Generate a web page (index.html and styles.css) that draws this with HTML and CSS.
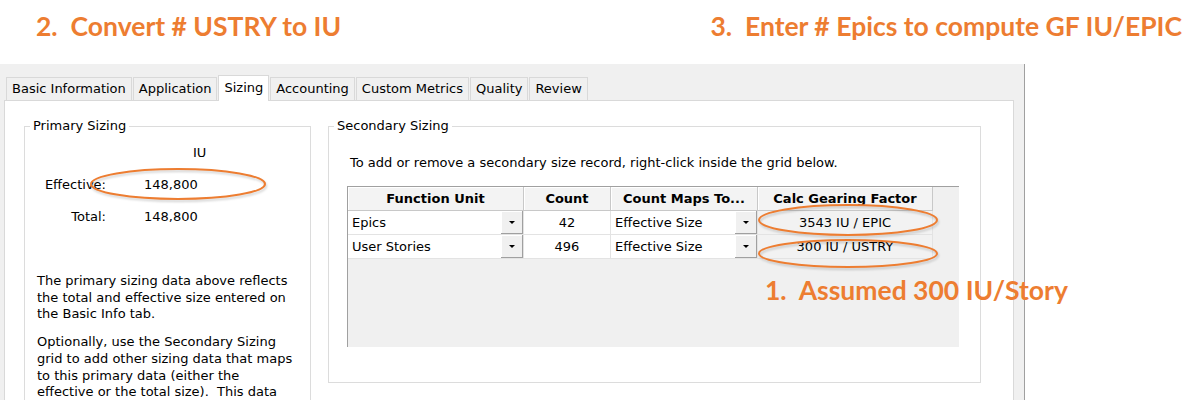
FILE: index.html
```html
<!DOCTYPE html>
<html lang="en">
<head>
<meta charset="utf-8">
<title>Sizing</title>
<link rel="stylesheet" href="styles.css">
</head>
<body>
<div class="page">
  <header class="titles">
    <h1 class="note">2.&nbsp; Convert # USTRY to IU</h1>
    <h1 class="note">3.&nbsp; Enter # Epics to compute GF IU/EPIC</h1>
  </header>

  <div class="window">
    <nav class="tabs">
      <div class="tab">Basic Information</div>
      <div class="tab">Application</div>
      <div class="tab active">Sizing</div>
      <div class="tab">Accounting</div>
      <div class="tab">Custom Metrics</div>
      <div class="tab">Quality</div>
      <div class="tab">Review</div>
    </nav>

    <div class="panel">
      <fieldset class="group primary">
        <legend>Primary Sizing</legend>
        <div class="metrics">
          <span></span><span class="unit">IU</span>
          <span class="lbl">Effective:</span><span class="val">148,800</span>
          <span class="lbl">Total:</span><span class="val">148,800</span>
        </div>
        <p class="help">The primary sizing data above reflects<br>the total and effective size entered on<br>the Basic Info tab.</p>
        <p class="help">Optionally, use the Secondary Sizing<br>grid to add other sizing data that maps<br>to this primary data (either the<br>effective or the total size).&nbsp; This data</p>
      </fieldset>

      <fieldset class="group secondary">
        <legend>Secondary Sizing</legend>
        <p class="intro">To add or remove a secondary size record, right-click inside the grid below.</p>
        <div class="grid">
          <div class="hd">Function Unit</div>
          <div class="hd">Count</div>
          <div class="hd">Count Maps To...</div>
          <div class="hd">Calc Gearing Factor</div>

          <div class="cell combo"><span>Epics</span><span class="drop"><i></i></span></div>
          <div class="cell num">42</div>
          <div class="cell combo"><span>Effective Size</span><span class="drop"><i></i></span></div>
          <div class="cell calc">3543 IU / EPIC</div>

          <div class="cell combo"><span>User Stories</span><span class="drop"><i></i></span></div>
          <div class="cell num">496</div>
          <div class="cell combo"><span>Effective Size</span><span class="drop"><i></i></span></div>
          <div class="cell calc">300 IU / USTRY</div>
        </div>
      </fieldset>
    </div>
  </div>

  <div class="note callout">1.&nbsp; Assumed 300 IU/Story</div>

  <svg class="marks" width="1200" height="400" viewBox="0 0 1200 400" aria-hidden="true">
    <g fill="none" stroke="#ed7d31" stroke-width="2">
      <ellipse cx="178" cy="184" rx="87" ry="15"/>
      <ellipse cx="848" cy="220" rx="89" ry="15"/>
      <ellipse cx="848" cy="253.5" rx="89" ry="13.5"/>
    </g>
  </svg>
</div>
</body>
</html>
```

FILE: styles.css
```css
* { box-sizing: border-box; }

html, body {
  margin: 0;
  padding: 0;
  background: #ffffff;
}

.page {
  position: relative;
  width: 1200px;
  height: 400px;
  overflow: hidden;
  background: #ffffff;
  font-family: "DejaVu Sans", "Liberation Sans", sans-serif;
  font-size: 13px;
  color: #000000;
}

/* orange annotations */
.titles {
  height: 64px;
  display: flex;
  justify-content: space-between;
  padding: 12px 18px 0 36px;
}

.note {
  margin: 0;
  font-family: Lato, "Open Sans", sans-serif;
  font-weight: 700;
  font-size: 26.5px;
  line-height: 28px;
  color: #ed7d31;
  white-space: nowrap;
}

.callout {
  position: absolute;
  left: 765px;
  top: 276px;
}

.marks {
  position: absolute;
  left: 0;
  top: 0;
  pointer-events: none;
  filter: drop-shadow(1px 2px 1px rgba(0, 0, 0, 0.18));
}

/* dialog window */
.window {
  width: 1025px;
  height: 336px;
  background: #f0f0f0;
  border-right: 1px solid #a0a0a0;
  padding: 13px 10px 0 4px;
}

.tabs {
  display: flex;
  align-items: flex-end;
  height: 23px;
  padding-left: 2px;
}

.tab {
  height: 23px;
  padding: 0 5px;
  line-height: 22px;
  background: #f0f0f0;
  border: 1px solid #d9d9d9;
  border-bottom: none;
  margin-right: 1px;
  white-space: nowrap;
}

.tab.active {
  position: relative;
  z-index: 1;
  height: 26px;
  margin-bottom: -1px;
  line-height: 23px;
  background: #ffffff;
}

.panel {
  height: 313px;
  background: #ffffff;
  border: 1px solid #d9d9d9;
  display: flex;
  align-items: flex-start;
  gap: 17px;
  padding: 17px 0 0 19px;
}

.group {
  margin: 0;
  padding: 0;
  border: 1px solid #dcdcdc;
  min-width: 0;
}

.group legend {
  margin-left: 5px;
  padding: 0 3px;
  line-height: 16px;
}

/* primary sizing */
.primary {
  width: 287px;
  height: 320px;
}

.metrics {
  display: grid;
  grid-template-columns: 81px 1fr;
  grid-auto-rows: 16px;
  column-gap: 38px;
  row-gap: 16px;
  margin-top: 11px;
  line-height: 16px;
}

.lbl { text-align: right; }

.unit { padding-left: 49px; }

.help {
  margin: 0 0 11px 0;
  padding-left: 12px;
  line-height: 16.7px;
  white-space: nowrap;
}

.metrics + .help { margin-top: 48px; }

/* secondary sizing */
.secondary {
  width: 653px;
  padding: 0 0 35px 0;
}

.intro {
  margin: 21px 0 15px 21px;
  line-height: 16px;
  white-space: nowrap;
}

.grid {
  width: 612px;
  height: 161px;
  margin-left: 18px;
  background: #f0f0f0;
  border-left: 1px solid #a0a0a0;
  border-top: 1px solid #a0a0a0;
  display: grid;
  grid-template-columns: 176px 87px 147px 175px;
  grid-template-rows: 24px 24px 24px;
  align-content: start;
}

.hd {
  background: #f3f3f3;
  border-right: 1px solid #c8c8c8;
  border-bottom: 1px solid #c8c8c8;
  box-shadow: inset 1px 1px 0 #ffffff;
  font-weight: 700;
  text-align: center;
  line-height: 23px;
  white-space: nowrap;
}

.cell {
  background: #ffffff;
  border-right: 1px solid #e3e3e3;
  border-bottom: 1px solid #e3e3e3;
  line-height: 23px;
  white-space: nowrap;
}

.combo {
  display: flex;
  justify-content: space-between;
  padding-left: 4px;
}

.num { text-align: center; }

.calc {
  background: #f2f2f2;
  text-align: center;
}

.drop {
  width: 22px;
  height: 23px;
  background: #f0f0f0;
  border-right: 1px solid #a0a0a0;
  border-bottom: 1px solid #a0a0a0;
  box-shadow: inset 1px 1px 0 #ffffff;
  display: flex;
  align-items: center;
  justify-content: center;
}

.drop i {
  width: 0;
  height: 0;
  border-left: 3px solid transparent;
  border-right: 3px solid transparent;
  border-top: 3px solid #000000;
}
```
